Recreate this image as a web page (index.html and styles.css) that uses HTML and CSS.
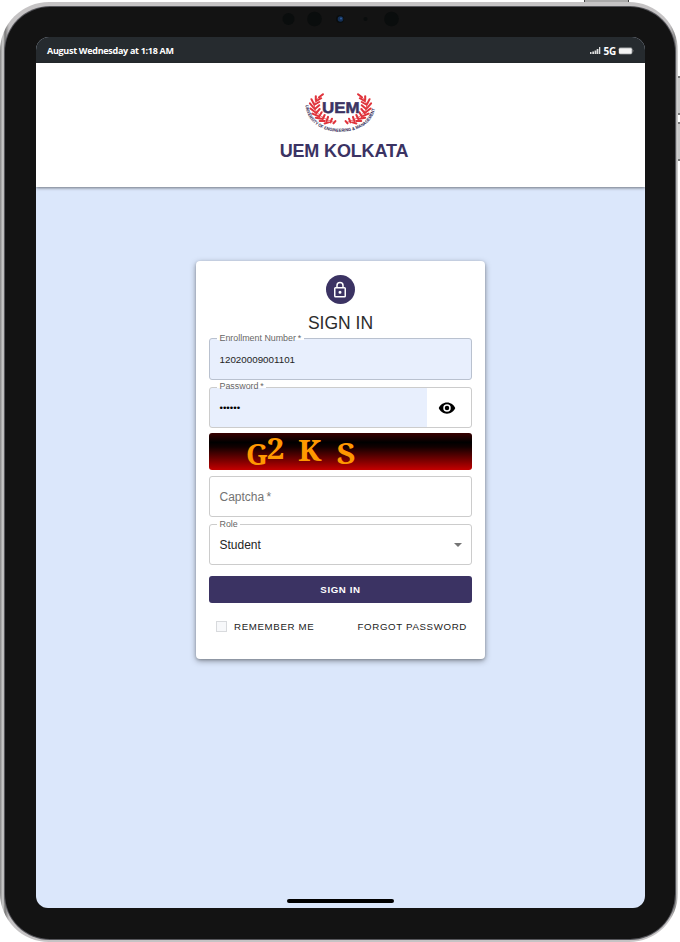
FILE: index.html
```html
<!DOCTYPE html>
<html lang="en">
<head>
<meta charset="utf-8">
<title>UEM Kolkata - Sign in</title>
<link rel="stylesheet" href="styles.css">
</head>
<body>
<div class="device">
  <span class="hw power"></span>
  <span class="hw vol-up"></span>
  <span class="hw vol-down"></span>
  <div class="bezel">
    <svg class="sensors" width="120" height="20" viewBox="0 0 120 20">
      <g fill="#0a0d0d"><circle cx="8.500" cy="10" r="6"/><circle cx="34.500" cy="10" r="7.300"/><circle cx="60" cy="10" r="4"/><circle cx="85.500" cy="10" r="2"/><circle cx="111.500" cy="10" r="7.300"/></g>
      <circle cx="60.500" cy="10" r="2.800" fill="#142f55"/><circle cx="61" cy="9.500" r="1" fill="#2f5f9e"/>
    </svg>
    <div class="screen">
      <div class="status">
        <span class="time">August Wednesday at 1:18 AM</span>
        <span class="signal">
          <svg width="11" height="8" viewBox="0 0 11 8" fill="#ddd"><path d="M0 5h1.500v2H0zM2.300 4.500h1.700V7H2.300zM4.600 3.500h1.700V7H4.600zM6.700 2h1.700v5H6.700zM9 0h1.300v7H9z"/></svg>
          <span class="net">5G</span>
          <svg width="16" height="8" viewBox="0 0 16 8"><rect x=".5" y=".3" width="14" height="7.200" rx="2" fill="#7b7f81"/><rect x="1" y="1.200" width="12.700" height="5.500" rx="1" fill="#f4f4f4"/><path d="M14.700 2.500q1.500 1.300 0 2.600z" fill="#999"/></svg>
        </span>
      </div>
      <header class="brand">
        <svg class="logo" width="71" height="41" viewBox="0 0 71 41">
          <defs>
            <path id="ring" d="M.6 13C1 27 13 39.800 35.500 39.800S70 27 70.400 13"/>
            <g id="branch" fill="none" stroke="#e0343c" stroke-linecap="round">
              <path d="M15 3.500Q6 10 8.500 18Q12 27 28 32.500" stroke-width=".8"/>
              <path d="M12.800 5.500L16.800 2.200M9.500 8.500L9.500 4.200M10 9.500L15 6.500M7.500 12.500L5 7.500M8 13.500L13 10.500M7.500 17L3.500 12M8.500 18L13 14M9 21.500L4 17.500M10 22.500L13.500 18M11.500 25.500L6 23M13 26L15.500 21.500M15 28.500L9.500 27.500M16.500 29L18.500 24.500M18.500 31L13.500 31M20.500 31L22 26.500M22.500 32.500L18.500 33.700M24.500 32.500L26 28.500M27.500 33.500L29.500 31" stroke-width="2.100"/>
            </g>
          </defs>
          <use href="#branch" transform="translate(1.500 .2) scale(.98 .93)"/>
          <use href="#branch" transform="matrix(-.98 0 0 .93 69.500 .2)"/>
          <text class="logo-name" x="17" y="20.500" textLength="37.500" lengthAdjust="spacingAndGlyphs">UEM</text>
          <text class="logo-ring"><textPath href="#ring" textLength="94" lengthAdjust="spacingAndGlyphs">UNIVERSITY OF ENGINEERING &amp; MANAGEMENT</textPath></text>
        </svg>
        <h1>UEM KOLKATA</h1>
      </header>
      <main>
        <form class="card">
          <div class="avatar"><svg width="18" height="18" viewBox="0 0 24 24" fill="#fff"><path d="M18 8h-1V6A5 5 0 0 0 7 6v2H6a2 2 0 0 0-2 2v10a2 2 0 0 0 2 2h12a2 2 0 0 0 2-2V10a2 2 0 0 0-2-2zM9 6a3 3 0 0 1 6 0v2H9zm9 14H6V10h12zm-6-3a2 2 0 1 0 0-4 2 2 0 0 0 0 4z"/></svg></div>
          <h2>SIGN IN</h2>
          <div class="field filled"><label>Enrollment Number&thinsp;*</label><span class="num">12020009001101</span></div>
          <div class="field password"><label>Password&thinsp;*</label><span class="dots">••••••</span>
            <svg width="18" height="18" viewBox="0 0 24 24"><path d="M12 4.500C7 4.500 2.730 7.610 1 12c1.730 4.390 6 7.500 11 7.500s9.270-3.110 11-7.500c-1.730-4.390-6-7.500-11-7.500zM12 17a5 5 0 1 1 0-10 5 5 0 0 1 0 10zm0-8a3 3 0 1 0 0 6 3 3 0 0 0 0-6z"/></svg>
          </div>
          <svg class="captcha" width="263" height="37" viewBox="0 0 263 37"><text x="37" y="32" textLength="22" lengthAdjust="spacingAndGlyphs">G</text><text x="57.500" y="25.500" textLength="18" lengthAdjust="spacingAndGlyphs">2</text><text x="89" y="27.500" textLength="23.500" lengthAdjust="spacingAndGlyphs">K</text><text x="127.500" y="31" textLength="19" lengthAdjust="spacingAndGlyphs">S</text></svg>
          <div class="field"><span class="placeholder">Captcha&thinsp;*</span></div>
          <div class="field role"><label>Role</label><span class="value">Student</span><i class="caret"></i></div>
          <button type="button">SIGN IN</button>
          <div class="options"><span class="remember"><i class="box"></i>REMEMBER ME</span><span>FORGOT PASSWORD</span></div>
        </form>
      </main>
      <span class="home"></span>
    </div>
  </div>
</div>
</body>
</html>
```
FILE: styles.css
```css
* { box-sizing: border-box; }
body { margin: 0; padding-top: 2px; height: 942px; overflow: hidden; background: #fff; font-family: "Liberation Sans", Arial, sans-serif; }
.device { position: relative; width: 678px; height: 940px; padding: 5px 3px 3px 5px; border-radius: 49px; background: linear-gradient(90deg, #858585 0, #d0d0d0 3px, #777 5px, #c5c3c4 9px, #c5c3c4 670px, #888 675px, #ddd 678px); }
.hw { position: absolute; background: #aaa; }
.power { left: 584px; top: -2px; width: 45px; height: 2px; border: solid #444; border-width: 0 1px; }
.vol-up, .vol-down { left: 678px; width: 2px; height: 39px; background: #c8c8c8; border: solid #777; border-width: 2px 0; }
.vol-up { top: 74px; }
.vol-down { top: 120px; }
.bezel { position: relative; height: 932px; padding: 30px 30px 31px 31px; border-radius: 45px; background: #131313; box-shadow: 0 0 0 1px #55555a; }
.sensors { position: absolute; left: 275px; top: 2px; }
.screen { position: relative; height: 871px; display: flex; flex-direction: column; overflow: hidden; border-radius: 13px 13px 12px 12px; background: #dbe7fb; }
.status { height: 26px; flex: none; display: flex; align-items: center; justify-content: space-between; padding: 1px 11px 0; background: #262b2f; color: #fff; font: 700 9px "Open Sans", sans-serif; }
.time { letter-spacing: -.29px; }
.signal { display: flex; align-items: center; gap: 2px; }
.net { font-size: 10px; letter-spacing: -.2px; }
.brand { position: relative; flex: none; height: 124px; display: flex; flex-direction: column; align-items: center; padding: 29px 0 0 0; background: #fff; box-shadow: 0 1px 3px rgba(0,0,0,.5); }
.logo text { text-rendering: geometricPrecision; }
.logo-name { font: 700 15.500px "Liberation Sans", sans-serif; fill: #3b3363; stroke: #3b3363; stroke-width: .5px; }
.logo-ring { font: 700 4.500px "Liberation Sans", sans-serif; fill: #29234f; }
h1 { margin: 8px 0 0 7px; font-size: 18px; line-height: 20px; font-weight: 700; letter-spacing: -.15px; color: #3b3363; }
main { display: flex; justify-content: center; padding-top: 74px; }
.card { width: 289px; height: 398px; padding: 14px 13px; border-radius: 4px; background: #fff; box-shadow: 0 2px 6px rgba(0,0,0,.35), 0 1px 3px rgba(0,0,0,.22); display: flex; flex-direction: column; }
.avatar { width: 29px; height: 29px; align-self: center; border-radius: 50%; background: #3b3363; display: flex; align-items: center; justify-content: center; }
.avatar svg { margin-right: 1px; }
h2 { margin: 9px 0 5px; text-align: center; font-size: 17.500px; line-height: 20px; font-weight: 400; color: #2c2c2c; }
.field { position: relative; flex: none; height: 41px; margin-bottom: 7px; padding: 0 9.500px; display: flex; align-items: center; border: 1px solid #ccc; border-radius: 3px; background: #fff; color: #242424; font-size: 12px; }
.field label { position: absolute; left: 7px; top: -6px; padding: 0 2.500px; font-size: 8.900px; line-height: 10px; color: #666; background: linear-gradient(#fff 7px, transparent 7px); white-space: nowrap; }
.filled { height: 42px; background: #e8effd; border-color: #b9c1cf; }
.num { font-size: 9.800px; }
.password { margin-bottom: 5px; justify-content: space-between; padding-right: 15px; background: linear-gradient(90deg, #e8effd 217px, #fff 217px); }
.password label { top: -7px; }
.dots { font-size: 9.800px; color: #000; }
.captcha { flex: none; overflow: visible; margin-bottom: 6px; border-radius: 3px; background: linear-gradient(#380000, #000 25%, #120000 38%, #c40000); }
.captcha text { font: 700 28px "Noto Serif", "DejaVu Serif", serif; fill: #ff9800; }
.placeholder { color: #737373; }
.role { margin-bottom: 11px; }
.caret { margin-left: auto; border: solid transparent; border-width: 4px 4px 0; border-top-color: #757575; }
button { height: 27px; flex: none; border: 0; border-radius: 3px; background: #3b3363; color: #fff; font: 700 9.700px "Liberation Sans", sans-serif; letter-spacing: .6px; }
.options { display: flex; justify-content: space-between; align-items: center; height: 14px; margin-top: 16px; padding: 0 5px 0 7px; font-size: 9.700px; letter-spacing: .65px; color: #222; }
.remember { display: flex; align-items: center; gap: 7px; }
.box { width: 11px; height: 11px; border: 1px solid #d8dadd; background: #f7f8fa; }
.home { position: absolute; left: 251px; bottom: 5px; width: 107px; height: 4px; border-radius: 2px; background: #000; }
```
